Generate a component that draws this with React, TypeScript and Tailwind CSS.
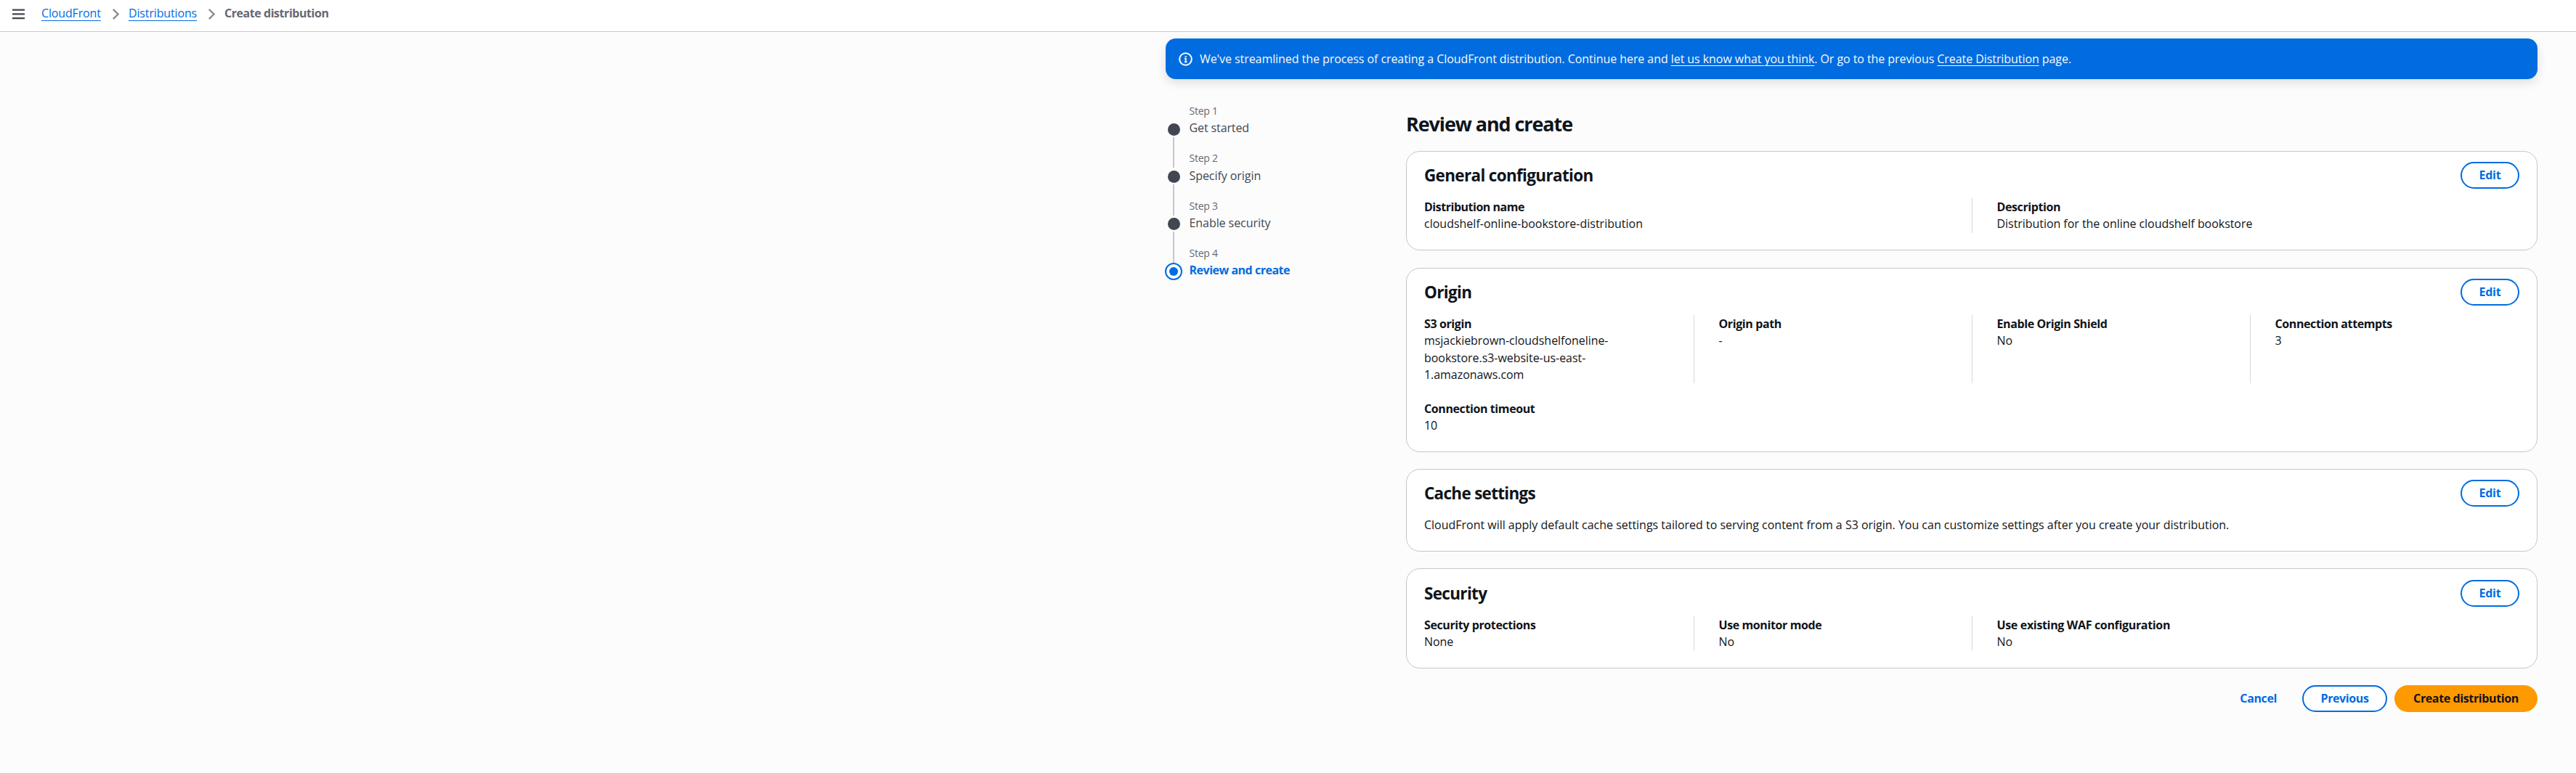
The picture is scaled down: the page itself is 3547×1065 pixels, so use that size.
import React from "react";

type Item = { label: string; value: string; labelClass?: string; valueClass?: string };

function Chevron() {
  return (
    <svg className="h-[19px] w-[19px] shrink-0" viewBox="0 0 16 16" fill="none" stroke="#8c8c94" strokeWidth="2">
      <path d="M4.9 2.4 10.6 8l-5.7 5.6" />
    </svg>
  );
}

function EditButton() {
  return (
    <button className="h-[37px] w-[81px] rounded-full border-2 border-[#006ce0] bg-white text-center font-bold leading-[33px] tracking-[-0.014em] text-[#006ce0]">
      Edit
    </button>
  );
}

function Card({ title, className, titleClass, children }: { title: string; className: string; titleClass: string; children: React.ReactNode }) {
  return (
    <section className={"rounded-[19px] border border-[#c6c6cd] bg-white px-6 " + className}>
      <div className="flex h-[37px] items-center justify-between">
        <h2 className={"text-[22.5px] font-bold leading-[28px] " + titleClass}>{title}</h2>
        <EditButton />
      </div>
      {children}
    </section>
  );
}

function Cell({ item, divided }: { item: Item; divided: boolean }) {
  return (
    <div className={"pt-px " + (divided ? "border-l-[1.5px] border-[#d9d9df] pl-[34px]" : "")}>
      <div className={"whitespace-nowrap font-bold " + (item.labelClass ?? "tracking-[-0.025em]")}>{item.label}</div>
      <div className={item.valueClass ?? "tracking-[-0.003em]"}>{item.value}</div>
    </div>
  );
}

const STEPS = [
  { n: "Step 1", name: "Get started", cls: "tracking-[-0.007em]" },
  { n: "Step 2", name: "Specify origin", cls: "tracking-[-0.004em]" },
  { n: "Step 3", name: "Enable security", cls: "tracking-[-0.004em]" },
  { n: "Step 4", name: "Review and create", cls: "tracking-[-0.0305em]" },
];

const ORIGIN: Item[] = [
  { label: "S3 origin", value: "msjackiebrown-cloudshelfoneline-bookstore.s3-website-us-east-1.amazonaws.com", valueClass: "w-[300px] tracking-[-0.003em]" },
  { label: "Origin path", value: "-" },
  { label: "Enable Origin Shield", value: "No" },
  { label: "Connection attempts", value: "3" },
];

const SECURITY: Item[] = [
  { label: "Security protections", value: "None" },
  { label: "Use monitor mode", value: "No" },
  { label: "Use existing WAF configuration", value: "No", labelClass: "tracking-[-0.021em]" },
];

export default function App() {
  return (
    <div className="h-[1065px] w-[3547px] overflow-hidden bg-[#fcfcfd] font-['Open_Sans','Noto_Sans',sans-serif] text-[16px] leading-[23.33px] text-[#0f141a]">
      <header className="flex h-11 items-start border-b border-[#c6c6cd] bg-white pl-[17px] pt-[7px]">
        <svg className="mt-[5px] h-[15px] w-[17px] shrink-0" viewBox="0 0 17 15" fill="#424650">
          <path d="M0 .5h17v2.2H0zM0 6.2h17v2.2H0zM0 12h17v2.2H0z" />
        </svg>
        <a className="ml-[23px] w-[82px] whitespace-nowrap tracking-[-0.01em] text-[#006ce0] underline decoration-1 underline-offset-[4px]">CloudFront</a>
        <div className="mt-[3px] ml-[11px] mr-[8px]"><Chevron /></div>
        <a className="w-[94px] whitespace-nowrap tracking-[-0.009em] text-[#006ce0] underline decoration-1 underline-offset-[4px]">Distributions</a>
        <div className="mt-[3px] ml-[11px] mr-[8px]"><Chevron /></div>
        <span className="whitespace-nowrap font-bold tracking-[-0.028em] text-[#656871]">Create distribution</span>
      </header>

      <main className="ml-[1605px] mt-[9px] w-[1889px]">
        <div className="flex h-14 items-center rounded-[14px] bg-[#006ce0] pl-[18px] text-[#f9f9fa] shadow-[0_5px_14px_rgba(0,7,22,0.12)]">
          <svg className="h-[19px] w-[19px] shrink-0" viewBox="0 0 16 16" fill="none" stroke="currentColor" strokeWidth="1.75">
            <circle cx="8" cy="8" r="7" />
            <path d="M6.6 7.2h1.6v4M6.6 11.3h3M7.3 4.9h1.8" strokeWidth="1.5" />
          </svg>
          <p className="ml-[10px] whitespace-nowrap pt-[2px] font-medium tracking-[-0.0042em]">
            We've streamlined the process of creating a CloudFront distribution. Continue here and{" "}
            <a className="underline decoration-1 underline-offset-[3px]">let us know what you think</a>. Or go to the previous{" "}
            <a className="underline decoration-1 underline-offset-[3px]">Create Distribution</a> page.
          </p>
        </div>

        <div className="flex">
          <ol className="w-[331px] pt-[35px]">
            {STEPS.map((s, i) => {
              const active = i === STEPS.length - 1;
              return (
                <li key={s.n} className="flex h-[65.33px]">
                  <div className="flex w-[22px] flex-col items-center">
                    {active ? (
                      <div className="mt-[22px] flex size-6 shrink-0 items-center justify-center rounded-full border-[2.33px] border-[#006ce0]">
                        <div className="size-3 rounded-full bg-[#006ce0]" />
                      </div>
                    ) : (
                      <>
                        <div className="mt-[25.5px] size-[17px] shrink-0 rounded-full bg-[#424650]" />
                        <div className="-mb-[22px] mt-[2px] w-[2px] flex-1 bg-[#c6c6cd]" />
                      </>
                    )}
                  </div>
                  <div className="ml-[10.5px]">
                    <div className="mb-[2.5px] text-[14px] leading-[18.67px] tracking-[-0.016em] text-[#656871]">{s.n}</div>
                    <div className={"whitespace-nowrap " + s.cls + (active ? " font-bold text-[#006ce0]" : " text-[#424650]")}>{s.name}</div>
                  </div>
                </li>
              );
            })}
          </ol>

          <div className="w-[1558px] pt-11">
            <h1 className="mb-5 text-[27px] font-bold leading-[35px] tracking-[-0.0407em]">Review and create</h1>

            <Card title="General configuration" titleClass="tracking-[-0.03em]" className="h-[137px] pt-[14px]">
              <div className="mt-[13px] grid grid-cols-[753.5px_1fr]">
                <Cell divided={false} item={{ label: "Distribution name", value: "cloudshelf-online-bookstore-distribution", labelClass: "tracking-[-0.03em]", valueClass: "" }} />
                <Cell divided item={{ label: "Description", value: "Distribution for the online cloudshelf bookstore" }} />
              </div>
            </Card>

            <Card title="Origin" titleClass="tracking-[-0.03em]" className="mt-6 h-[254px] pt-[14px]">
              <div className="mt-[13px] grid grid-cols-[370.5px_383px_383px_1fr] gap-y-[22.33px]">
                {ORIGIN.map((it, i) => <Cell key={it.label} item={it} divided={i > 0} />)}
                <Cell divided={false} item={{ label: "Connection timeout", value: "10" }} />
              </div>
            </Card>

            <Card title="Cache settings" titleClass="tracking-[-0.0317em]" className="mt-[23px] h-[114px] pt-[14px]">
              <p className="mt-[14px] whitespace-nowrap tracking-[-0.001em]">
                CloudFront will apply default cache settings tailored to serving content from a S3 origin. You can customize settings after you create your distribution.
              </p>
            </Card>

            <Card title="Security" titleClass="tracking-[-0.03em]" className="mt-[23px] h-[138px] pt-[15px]">
              <div className="mt-[13px] grid grid-cols-[370.5px_383px_1fr]">
                {SECURITY.map((it, i) => <Cell key={it.label} item={it} divided={i > 0} />)}
              </div>
            </Card>

            <div className="mt-[23px] flex justify-end font-bold leading-[37px]">
              <button className="mr-[35px] tracking-[-0.024em] text-[#006ce0]">Cancel</button>
              <button className="mr-[10px] h-[37px] w-[117px] rounded-full border-2 border-[#006ce0] bg-white leading-[33px] tracking-[-0.024em] text-[#006ce0]">Previous</button>
              <button className="h-[37px] w-[197px] rounded-full bg-[#ff9900] tracking-[-0.024em]">Create distribution</button>
            </div>
          </div>
        </div>
      </main>
    </div>
  );
}
